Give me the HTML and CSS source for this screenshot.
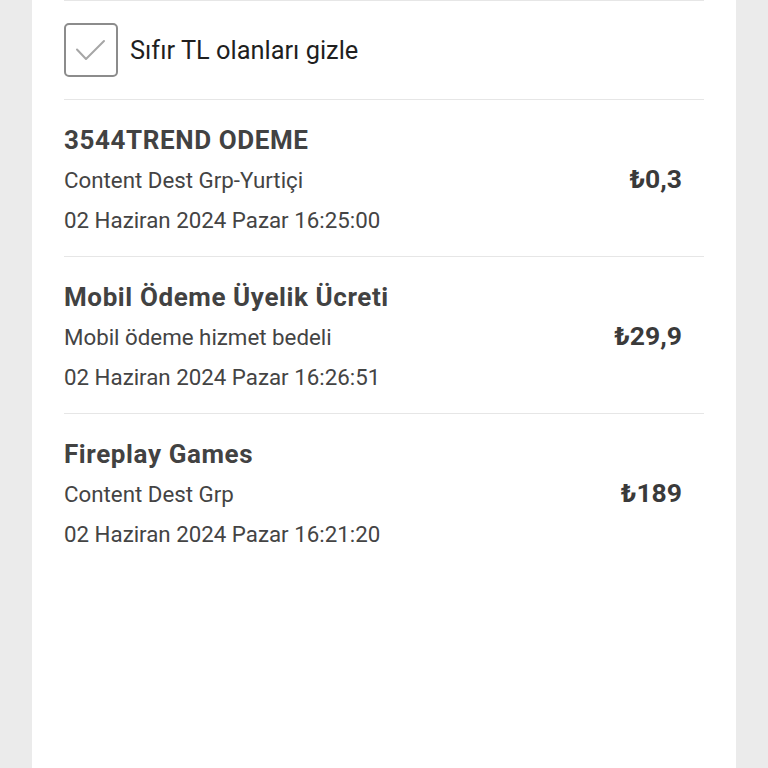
FILE: index.html
```html
<!DOCTYPE html>
<html lang="tr">
<head>
<meta charset="utf-8">
<title>Harcamalar</title>
<link rel="stylesheet" href="styles.css">
</head>
<body>
<div class="panel">
  <label class="filter">
    <span class="box">
      <svg width="54" height="54" viewBox="0 0 54 54"><path d="M13 26.5 L22 36 L40 18" fill="none" stroke="#a6a6a6" stroke-width="2" stroke-linecap="round" stroke-linejoin="round"/></svg>
    </span>
    <span class="filter-text">Sıfır TL olanları gizle</span>
  </label>
  <div class="item">
    <div class="info">
      <div class="title">3544TREND ODEME</div>
      <div class="line">Content Dest Grp-Yurtiçi</div>
      <div class="line">02 Haziran 2024 Pazar 16:25:00</div>
    </div>
    <div class="price">₺0,3</div>
  </div>
  <div class="item">
    <div class="info">
      <div class="title">Mobil Ödeme Üyelik Ücreti</div>
      <div class="line">Mobil ödeme hizmet bedeli</div>
      <div class="line">02 Haziran 2024 Pazar 16:26:51</div>
    </div>
    <div class="price">₺29,9</div>
  </div>
  <div class="item last">
    <div class="info">
      <div class="title">Fireplay Games</div>
      <div class="line">Content Dest Grp</div>
      <div class="line">02 Haziran 2024 Pazar 16:21:20</div>
    </div>
    <div class="price">₺189</div>
  </div>
</div>
</body>
</html>
```
FILE: styles.css
```css
html, body {
  margin: 0;
  padding: 0;
  background: #ebebeb;
}
body {
  font-family: Roboto, "Noto Sans", sans-serif;
  color: #3a3a3a;
}
.panel {
  margin: 0 32px;
  background: #ffffff;
  min-height: 768px;
  padding: 0 32px;
  box-sizing: border-box;
}
.filter {
  display: flex;
  align-items: center;
  gap: 12px;
  padding: 22px 0;
  border-top: 1px solid #e6e6e6;
  border-bottom: 1px solid #e6e6e6;
}
.box {
  width: 54px;
  height: 54px;
  box-sizing: border-box;
  border: 2px solid #8c8c8c;
  border-radius: 5px;
  display: flex;
  align-items: center;
  justify-content: center;
}
.box svg {
  display: block;
  flex: none;
}
.filter-text {
  font-size: 25.4px;
  color: #1f1f1f;
}
.item {
  display: flex;
  align-items: center;
  justify-content: space-between;
  padding: 20px 22px 16px 0;
  border-bottom: 1px solid #e6e6e6;
}
.item.last {
  border-bottom: none;
}
.title {
  font-size: 26px;
  font-weight: 700;
  letter-spacing: 0.6px;
  line-height: 40px;
  color: #424242;
}
.line {
  font-size: 22.3px;
  line-height: 40px;
  color: #444;
}
.price {
  font-size: 26.5px;
  font-weight: 700;
  color: #3a3a3a;
  padding-bottom: 4px;
}
```
